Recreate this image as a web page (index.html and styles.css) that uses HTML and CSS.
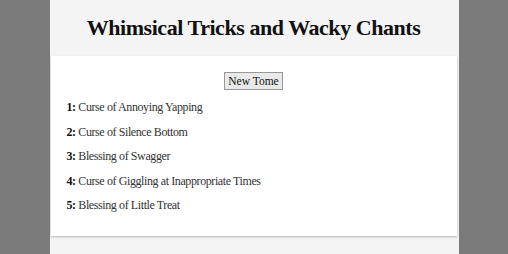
FILE: index.html
```html
<!DOCTYPE html>
<html>
<head>
<meta charset="utf-8">
<link rel="stylesheet" href="styles.css">
</head>
<body>
<div class="page">
  <header class="head">
    <h1 class="title">Whimsical Tricks and Wacky Chants</h1>
  </header>
  <main class="card">
    <div class="actions"><button class="btn">New Tome</button></div>
    <ul class="list">
      <li><b>1:</b> Curse of Annoying Yapping</li>
      <li><b>2:</b> Curse of Silence Bottom</li>
      <li><b>3:</b> Blessing of Swagger</li>
      <li><b>4:</b> Curse of Giggling at Inappropriate Times</li>
      <li><b>5:</b> Blessing of Little Treat</li>
    </ul>
  </main>
</div>
</body>
</html>
```
FILE: styles.css
```css
html, body { margin: 0; padding: 0; }
body {
  background: #7b7b7b;
  font-family: "Liberation Serif", serif;
  color: #222;
  height: 254px;
  overflow: hidden;
}
.page {
  width: 409px;
  margin: 0 auto;
  background: #f4f4f4;
  min-height: 254px;
  padding: 0 2px 0 1px;
  box-sizing: border-box;
}
.head {
  height: 56px;
  display: flex;
  align-items: center;
  justify-content: center;
}
.title {
  margin: 0;
  font-size: 22px;
  font-weight: bold;
  letter-spacing: -0.45px;
  white-space: nowrap;
  color: #111;
}
.card {
  background: #fff;
  box-shadow: 0 1px 2px rgba(0,0,0,0.25);
  padding: 16px 16px 18px;
}
.actions { display: flex; justify-content: center; }
.btn {
  font-family: "Liberation Serif", serif;
  font-size: 11.5px;
  line-height: 14px;
  padding: 1px 3px;
  background: #e9e9e9;
  border: 1px solid #999;
  border-radius: 0;
  color: #111;
}
.list {
  list-style: none;
  margin: 5px 0 0;
  padding: 0;
  font-size: 12px;
  letter-spacing: -0.4px;
}
.list li { height: 24.5px; line-height: 24.5px; color: #333; }
.list b { color: #111; }
```
